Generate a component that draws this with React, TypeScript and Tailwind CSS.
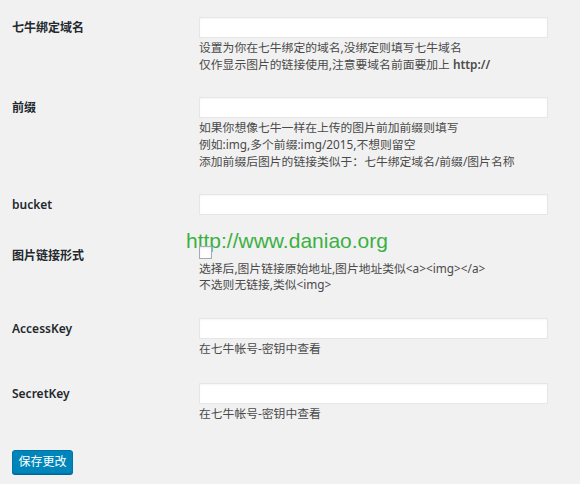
import React from 'react';

const font = { fontFamily: '"Noto Sans", "Noto Sans CJK SC", sans-serif' };

function Field({ label, children, labelPad = 'pt-[2px]', className = '' }: { label: string; children: React.ReactNode; labelPad?: string; className?: string }) {
  return (
    <div className={`flex ${className}`}>
      <div className={`w-[187px] shrink-0 text-[12px] leading-[17px] font-semibold text-[#23282d] ${labelPad}`}>{label}</div>
      <div className="flex-1">{children}</div>
    </div>
  );
}

function TextInput() {
  return <input type="text" className="block h-[21px] w-[349px] border border-[#e6e6e6] bg-white shadow-[inset_0_1px_2px_rgba(0,0,0,0.04)] outline-none" />;
}

function Desc({ children, leading = 'leading-[17px]' }: { children: React.ReactNode; leading?: string }) {
  return <div className={`mt-[1px] text-[11.8px] text-[#4a4a4a] ${leading}`}>{children}</div>;
}

export default function App() {
  return (
    <div className="relative min-h-[484px] w-[580px] bg-[#f1f1f1] pl-[12px] pt-[17px]" style={font}>
      <Field label="七牛绑定域名">
        <TextInput />
        <Desc>
          <p>设置为你在七牛绑定的域名,没绑定则填写七牛域名</p>
          <p>仅作显示图片的链接使用,注意要域名前面要加上 <strong className="font-semibold">http://</strong></p>
        </Desc>
      </Field>

      <Field label="前缀" className="mt-[24px]">
        <TextInput />
        <Desc>
          <p>如果你想像七牛一样在上传的图片前加前缀则填写</p>
          <p>例如:img,多个前缀:img/2015,不想则留空</p>
          <p>添加前缀后图片的链接类似于：七牛绑定域名/前缀/图片名称</p>
        </Desc>
      </Field>

      <Field label="bucket" className="mt-[24px]">
        <TextInput />
      </Field>

      <Field label="图片链接形式" labelPad="pt-[1px]" className="mt-[31px]">
        <input type="checkbox" className="relative z-10 block h-[13px] w-[13px] appearance-none border border-[#a7abb0] bg-white shadow-[inset_0_1px_2px_rgba(0,0,0,0.1)]" />
        <Desc leading="leading-[16px]">
          <p>选择后,图片链接原始地址,图片地址类似&lt;a&gt;&lt;img&gt;&lt;/a&gt;</p>
          <p>不选则无链接,类似&lt;img&gt;</p>
        </Desc>
      </Field>

      <Field label="AccessKey" className="mt-[26px]">
        <TextInput />
        <Desc>
          <p>在七牛帐号-密钥中查看</p>
        </Desc>
      </Field>

      <Field label="SecretKey" className="mt-[26px]">
        <TextInput />
        <Desc>
          <p>在七牛帐号-密钥中查看</p>
        </Desc>
      </Field>

      <button className="mt-[28px] flex h-[24px] w-[61px] items-center justify-center rounded-[3px] border border-[#0073aa] bg-[#0085ba] text-[12px] text-white shadow-[0_1px_0_#006799]">
        保存更改
      </button>

      <div className="pointer-events-none absolute left-[186px] top-[230px] text-[21px] leading-[21px] text-[#3cb043]" style={{ fontFamily: '"Liberation Sans", Arial, sans-serif' }}>
        http://www.daniao.org
      </div>
    </div>
  );
}
